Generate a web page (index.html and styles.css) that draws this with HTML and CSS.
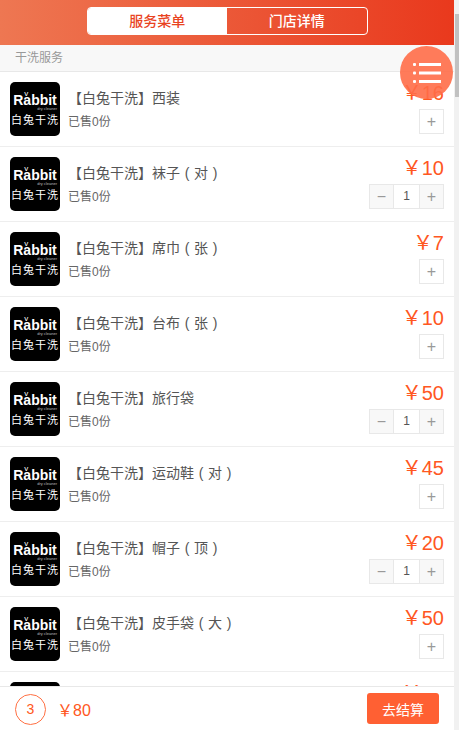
FILE: index.html
```html
<!DOCTYPE html>
<html lang="zh-CN">
<head>
<meta charset="utf-8">
<title>服务菜单</title>
<link rel="stylesheet" href="styles.css">
</head>
<body>
<div class="page">
  <div class="main">
    <header class="topbar">
      <div class="tabs">
        <div class="tab tab-active">服务菜单</div>
        <div class="tab">门店详情</div>
      </div>
    </header>
    <main class="content">
      <div class="section-title">干洗服务</div>
      <article class="item">
        <div class="logo"><span class="logo-en">R<span class="logo-a">a</span>bbit</span><span class="logo-sub">dry cleaner</span><span class="logo-cn">白兔干洗</span></div>
        <div class="info"><div class="name">【白兔干洗】西装</div><div class="sold">已售0份</div></div>
        <div class="buy"><div class="price">￥16</div><div class="stepper"><span class="btn btn-plus">+</span></div></div>
      </article>
      <article class="item">
        <div class="logo"><span class="logo-en">R<span class="logo-a">a</span>bbit</span><span class="logo-sub">dry cleaner</span><span class="logo-cn">白兔干洗</span></div>
        <div class="info"><div class="name">【白兔干洗】袜子<span class="paren">(</span>对<span class="paren">)</span></div><div class="sold">已售0份</div></div>
        <div class="buy"><div class="price">￥10</div><div class="stepper"><span class="btn btn-minus">−</span><span class="qty">1</span><span class="btn btn-plus">+</span></div></div>
      </article>
      <article class="item">
        <div class="logo"><span class="logo-en">R<span class="logo-a">a</span>bbit</span><span class="logo-sub">dry cleaner</span><span class="logo-cn">白兔干洗</span></div>
        <div class="info"><div class="name">【白兔干洗】席巾<span class="paren">(</span>张<span class="paren">)</span></div><div class="sold">已售0份</div></div>
        <div class="buy"><div class="price">￥7</div><div class="stepper"><span class="btn btn-plus">+</span></div></div>
      </article>
      <article class="item">
        <div class="logo"><span class="logo-en">R<span class="logo-a">a</span>bbit</span><span class="logo-sub">dry cleaner</span><span class="logo-cn">白兔干洗</span></div>
        <div class="info"><div class="name">【白兔干洗】台布<span class="paren">(</span>张<span class="paren">)</span></div><div class="sold">已售0份</div></div>
        <div class="buy"><div class="price">￥10</div><div class="stepper"><span class="btn btn-plus">+</span></div></div>
      </article>
      <article class="item">
        <div class="logo"><span class="logo-en">R<span class="logo-a">a</span>bbit</span><span class="logo-sub">dry cleaner</span><span class="logo-cn">白兔干洗</span></div>
        <div class="info"><div class="name">【白兔干洗】旅行袋</div><div class="sold">已售0份</div></div>
        <div class="buy"><div class="price">￥50</div><div class="stepper"><span class="btn btn-minus">−</span><span class="qty">1</span><span class="btn btn-plus">+</span></div></div>
      </article>
      <article class="item">
        <div class="logo"><span class="logo-en">R<span class="logo-a">a</span>bbit</span><span class="logo-sub">dry cleaner</span><span class="logo-cn">白兔干洗</span></div>
        <div class="info"><div class="name">【白兔干洗】运动鞋<span class="paren">(</span>对<span class="paren">)</span></div><div class="sold">已售0份</div></div>
        <div class="buy"><div class="price">￥45</div><div class="stepper"><span class="btn btn-plus">+</span></div></div>
      </article>
      <article class="item">
        <div class="logo"><span class="logo-en">R<span class="logo-a">a</span>bbit</span><span class="logo-sub">dry cleaner</span><span class="logo-cn">白兔干洗</span></div>
        <div class="info"><div class="name">【白兔干洗】帽子<span class="paren">(</span>顶<span class="paren">)</span></div><div class="sold">已售0份</div></div>
        <div class="buy"><div class="price">￥20</div><div class="stepper"><span class="btn btn-minus">−</span><span class="qty">1</span><span class="btn btn-plus">+</span></div></div>
      </article>
      <article class="item">
        <div class="logo"><span class="logo-en">R<span class="logo-a">a</span>bbit</span><span class="logo-sub">dry cleaner</span><span class="logo-cn">白兔干洗</span></div>
        <div class="info"><div class="name">【白兔干洗】皮手袋<span class="paren">(</span>大<span class="paren">)</span></div><div class="sold">已售0份</div></div>
        <div class="buy"><div class="price">￥50</div><div class="stepper"><span class="btn btn-plus">+</span></div></div>
      </article>
      <article class="item item-peek">
        <div class="logo"></div>
        <div class="info"></div>
        <div class="buy"><div class="price">￥10</div></div>
      </article>
    </main>
    <button class="menu-fab" type="button" aria-label="菜单">
      <svg class="menu-icon" width="28" height="20" viewBox="0 0 28 20">
        <rect x="0" y="0" width="3" height="3" rx="1"/><rect x="6" y="0" width="22" height="3"/>
        <rect x="0" y="8.500" width="3" height="3" rx="1"/><rect x="6" y="8.500" width="22" height="3"/>
        <rect x="0" y="17" width="3" height="3" rx="1"/><rect x="6" y="17" width="22" height="3"/>
      </svg>
    </button>
    <footer class="cartbar">
      <div class="cart-count">3</div>
      <div class="cart-total">￥80</div>
      <button class="checkout" type="button">去结算</button>
    </footer>
  </div>
  <div class="scrollbar"><div class="scroll-thumb"></div></div>
</div>
</body>
</html>
```
FILE: styles.css
```css
* {
  box-sizing: border-box;
}
html,
body {
  height: 100%;
}
body {
  margin: 0;
  overflow: hidden;
  background: #fff;
  color: #555;
  font-family: "Liberation Sans", "Noto Sans CJK SC", sans-serif;
  font-size: 14px;
}
.page {
  display: flex;
  height: 100%;
}
.main {
  position: relative;
  flex: 1;
  min-width: 0;
  display: flex;
  flex-direction: column;
}
.scrollbar {
  flex: none;
  width: 5px;
  padding: 14px 0 0 1px;
  background: #f1f1f1;
}
.scroll-thumb {
  height: 83px;
  background: #c1c1c1;
}
.topbar {
  flex: none;
  height: 45px;
  display: flex;
  justify-content: center;
  padding-top: 7px;
  background: linear-gradient(to right, #ee7752, #e9391d);
}
.tabs {
  display: flex;
  width: 281px;
  height: 28px;
  border: 1px solid #fff;
  border-radius: 4px;
  overflow: hidden;
}
.tab {
  flex: 1;
  text-align: center;
  line-height: 26px;
  font-size: 14px;
  font-weight: 500;
  color: #fff;
}
.tab-active {
  background: #fff;
  color: #e9431f;
}
.content {
  flex: 1;
  min-height: 0;
  overflow: hidden;
}
.section-title {
  height: 27px;
  line-height: 27px;
  padding-left: 15px;
  font-size: 12px;
  color: #999;
  background: #f8f8f8;
  border-bottom: 1px solid #e8e8e8;
}
.item {
  display: flex;
  height: 75px;
  padding: 10px 10px 0;
  border-bottom: 1px solid #eee;
}
.logo {
  flex: none;
  display: flex;
  flex-direction: column;
  align-items: center;
  width: 50px;
  height: 54px;
  padding-top: 11px;
  background: #000;
  border-radius: 5px;
  color: #fff;
}
.logo-en {
  font-size: 14px;
  font-weight: 700;
  line-height: 14px;
}
.logo-a {
  position: relative;
}
.logo-a::before {
  content: "v";
  position: absolute;
  left: 1px;
  top: -2px;
  font-size: 8px;
  line-height: 8px;
  font-weight: 400;
}
.logo-sub {
  align-self: flex-end;
  padding-right: 3px;
  font-size: 4px;
  line-height: 4px;
  color: #bbb;
}
.logo-cn {
  margin-top: 2px;
  font-size: 11px;
  line-height: 14px;
  letter-spacing: 1px;
  white-space: nowrap;
}
.info {
  flex: 1;
  padding: 7px 0 0 8px;
}
.name {
  line-height: 18px;
  font-size: 14px;
  color: #555;
}
.paren {
  display: inline-block;
  width: 14px;
  text-align: center;
}
.sold {
  margin-top: 7px;
  font-size: 12px;
  line-height: 16px;
  color: #666;
}
.buy {
  display: flex;
  flex-direction: column;
  align-items: flex-end;
  margin-top: -2px;
}
.price {
  height: 26px;
  line-height: 26px;
  font-size: 20px;
  color: #ff5722;
}
.stepper {
  display: flex;
  height: 25px;
  margin-top: 3px;
  border: 1px solid #e8e8e8;
}
.btn {
  width: 23px;
  line-height: 24px;
  text-align: center;
  font-size: 16px;
  color: #999;
}
.btn-minus {
  width: 24px;
  background: #f8f8f8;
  border-right: 1px solid #e8e8e8;
}
.qty {
  width: 25px;
  line-height: 23px;
  text-align: center;
  font-size: 12px;
  color: #555;
}
.stepper .qty + .btn-plus {
  width: 24px;
  background: #f8f8f8;
  border-left: 1px solid #e8e8e8;
}
.menu-fab {
  position: absolute;
  top: 46px;
  left: 400px;
  width: 53px;
  height: 53px;
  padding: 0;
  display: flex;
  align-items: center;
  justify-content: center;
  border: 0;
  border-radius: 50%;
  background: rgba(255, 109, 72, 0.9);
}
.menu-icon {
  fill: #fff;
}
.cartbar {
  flex: none;
  height: 44px;
  display: flex;
  align-items: center;
  padding: 0 15px;
  background: #fff;
  border-top: 1px solid #e8e8e8;
}
.cart-count {
  width: 31px;
  height: 31px;
  margin-top: 2px;
  border: 1px solid #ff7043;
  border-radius: 50%;
  text-align: center;
  line-height: 29px;
  font-size: 14px;
  color: #ff5722;
}
.cart-total {
  margin-left: 11px;
  font-size: 16px;
  color: #ff5722;
}
.checkout {
  margin-left: auto;
  width: 72px;
  height: 31px;
  padding: 0;
  border: 0;
  border-radius: 3px;
  background: #ff6033;
  color: #fff;
  font-family: inherit;
  font-size: 14px;
}
```
